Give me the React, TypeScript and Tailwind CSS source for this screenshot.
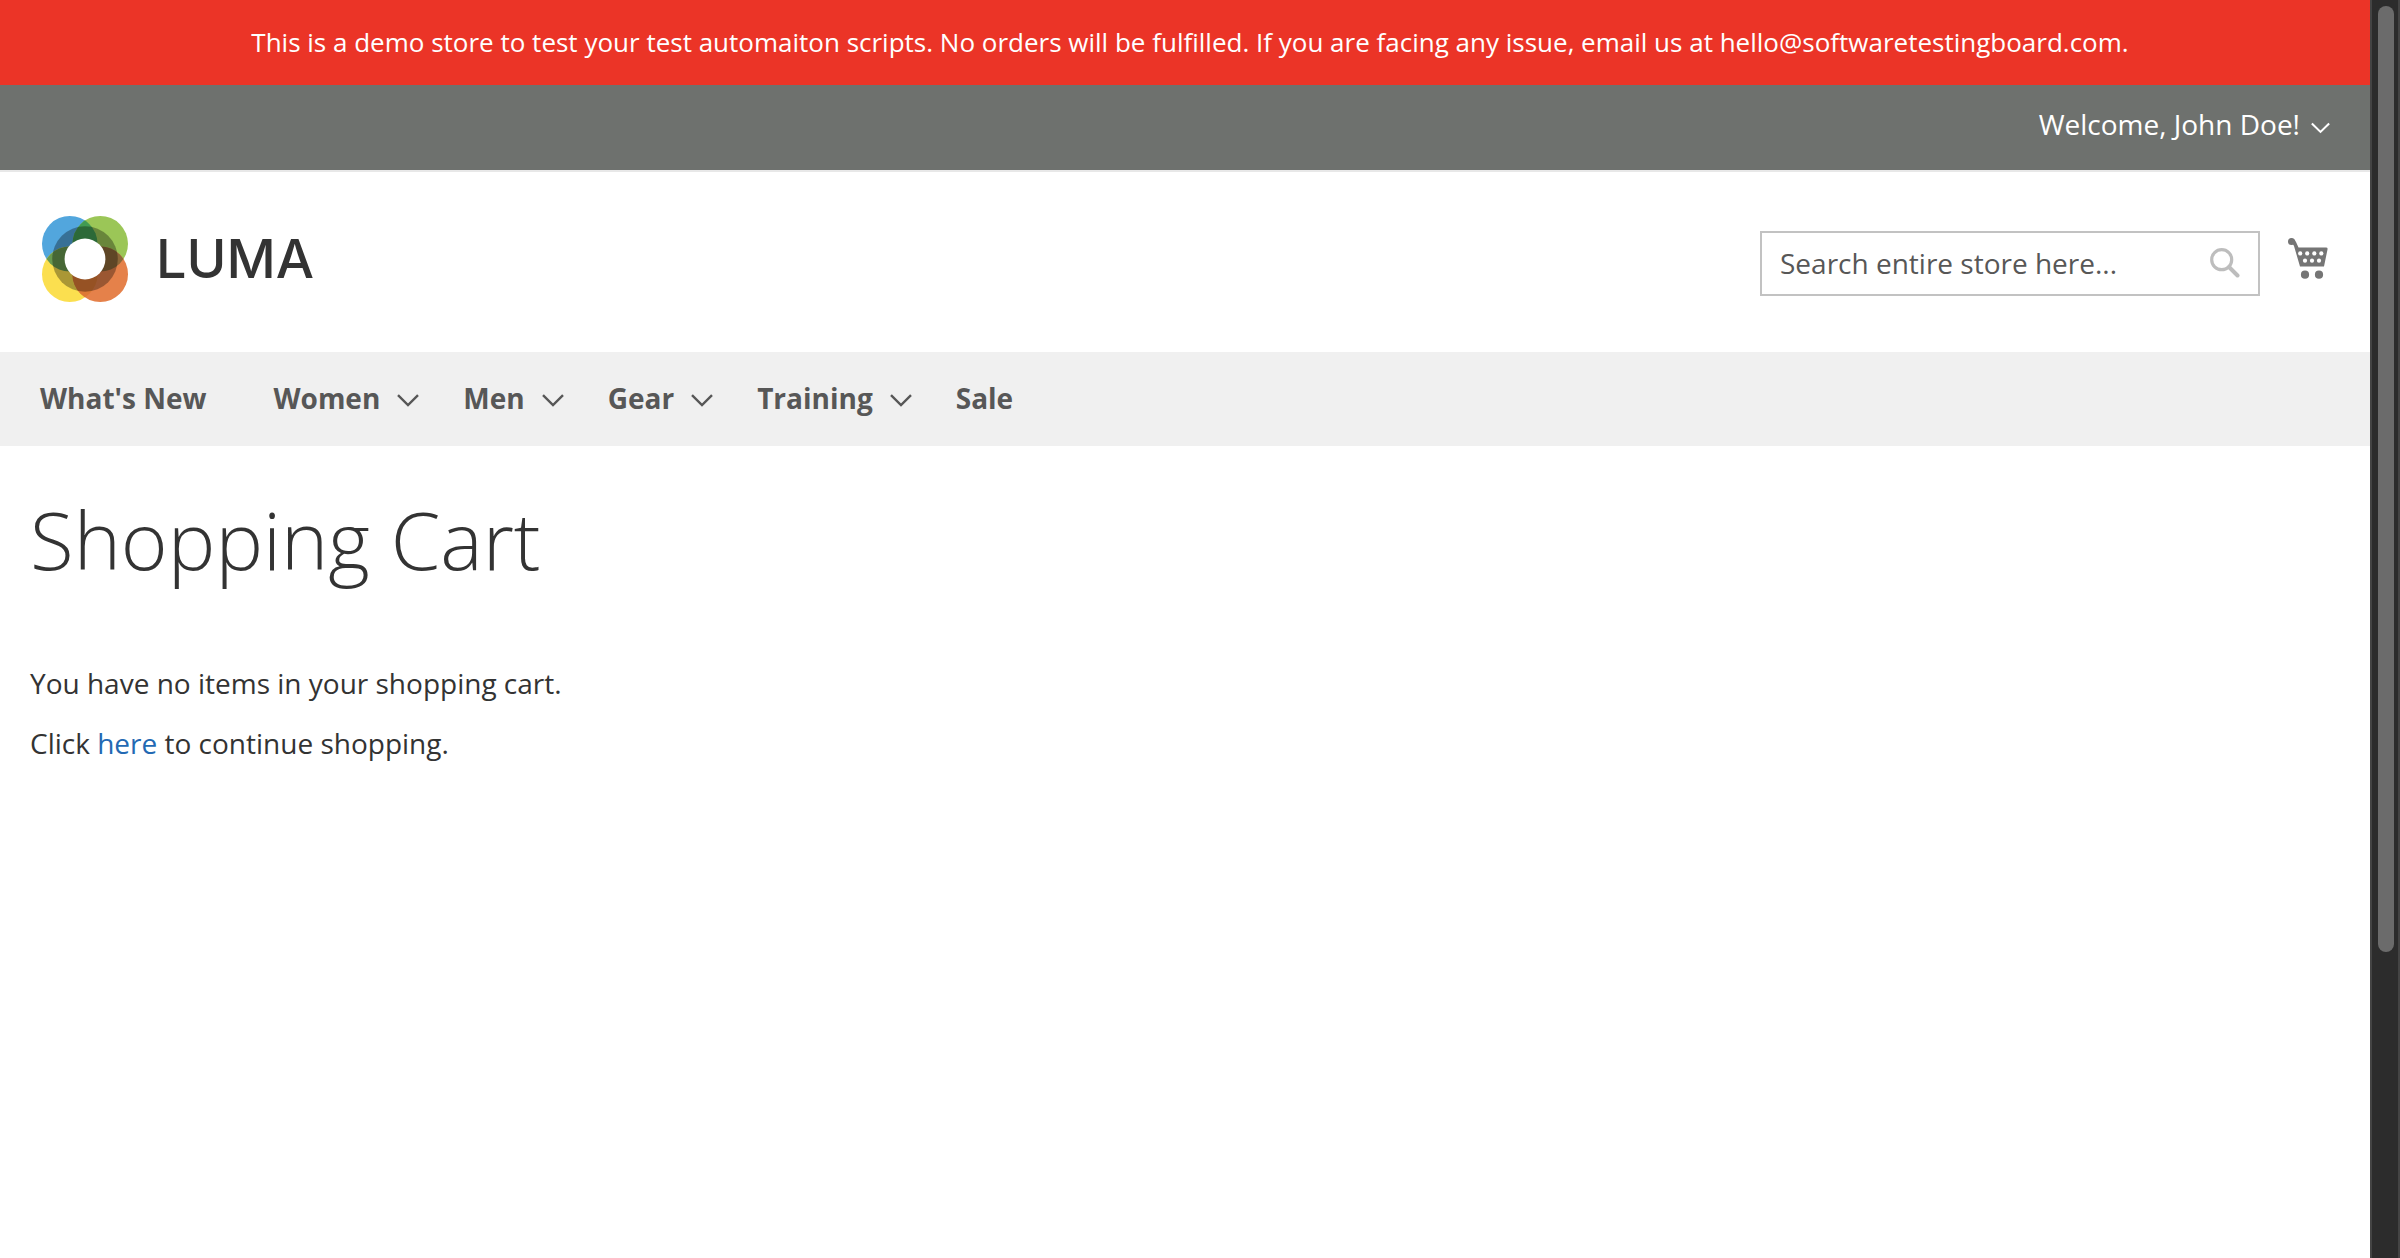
const navItems = [
  { label: "What's New", menu: false },
  { label: "Women", menu: true },
  { label: "Men", menu: true },
  { label: "Gear", menu: true },
  { label: "Training", menu: true },
  { label: "Sale", menu: false },
];

function Chevron({ className }: { className: string }) {
  return (
    <svg viewBox="0 0 22 13" className={className} fill="none" stroke="currentColor" strokeWidth="2.4" aria-hidden="true">
      <path d="M1 1.2 L11 11 L21 1.2" />
    </svg>
  );
}

function LogoMark() {
  return (
    <svg viewBox="66 78 257 257" className="size-[86px]" aria-hidden="true">
      <defs>
        <clipPath id="blue"><circle cx="149" cy="161" r="83" /></clipPath>
        <clipPath id="green"><circle cx="240" cy="161" r="83" /></clipPath>
        <clipPath id="yellow"><circle cx="149" cy="252" r="83" /></clipPath>
      </defs>
      <circle cx="149" cy="161" r="83" fill="#52a6dd" />
      <circle cx="240" cy="161" r="83" fill="#9bc657" />
      <circle cx="149" cy="252" r="83" fill="#fbdf4f" />
      <circle cx="240" cy="252" r="83" fill="#e5814a" />
      <circle cx="240" cy="161" r="83" fill="#419b53" clipPath="url(#blue)" />
      <circle cx="149" cy="252" r="83" fill="#68994f" clipPath="url(#blue)" />
      <circle cx="240" cy="252" r="83" fill="#8d6839" clipPath="url(#green)" />
      <circle cx="240" cy="252" r="83" fill="#de7a35" clipPath="url(#yellow)" />
      <circle cx="194.5" cy="206.5" r="98" fill="#000" fillOpacity="0.32" />
      <circle cx="194.5" cy="206.5" r="61" fill="#fff" />
    </svg>
  );
}

function CartIcon() {
  return (
    <svg viewBox="0 0 40 42" className="h-[42px] w-10" fill="#757575" aria-hidden="true">
      <circle cx="3.5" cy="3.5" r="3.5" />
      <path d="M2 1 Q6 0 8 4 L10.5 9.5 L38 9.5 Q40 9.5 39.5 11.5 L36 28.5 L12 28.5 L6 8 Z" />
      <circle cx="17" cy="36.7" r="4.1" />
      <circle cx="31" cy="36.7" r="4.1" />
      <g fill="#fff">
        <circle cx="12.2" cy="15.4" r="2.1" /><circle cx="19.2" cy="15.4" r="2.1" />
        <circle cx="26.3" cy="15.4" r="2.1" /><circle cx="33.3" cy="15.4" r="2.1" />
        <circle cx="17" cy="22.7" r="2.1" /><circle cx="24" cy="22.7" r="2.1" /><circle cx="31" cy="22.7" r="2.1" />
      </g>
    </svg>
  );
}

export default function App() {
  return (
    <div className="flex min-h-screen bg-white font-['Open_Sans',sans-serif] text-[28px] leading-10 text-[#333333]">
      <div className="min-w-0 flex-1">
        <p className="bg-[#eb3427] py-6 pr-5 pl-[30px] text-center text-[26px] leading-[37px] text-white">
          This is a demo store to test your test automaiton scripts. No orders will be fulfilled. If you are facing any issue, email us at hello@softwaretestingboard.com.
        </p>
        <header>
          <div className="flex h-[87px] justify-end border-b-2 border-[#e8e8e8] bg-[#6e716e] px-10 pt-[19px]">
            <button type="button" className="flex h-10 items-center gap-[11px] text-white">
              <span>Welcome, John Doe!</span>
              <Chevron className="mt-2 h-3 w-[19px]" />
            </button>
          </div>
          <div className="flex items-center justify-between px-[42px] pt-11 pb-[50px]">
            <a href="#home" className="flex items-center gap-7 text-[#333333]" aria-label="Luma">
              <LogoMark />
              <span className="font-['Inter',sans-serif] text-[54px] leading-none font-medium">LUMA</span>
            </a>
            <div className="flex items-center gap-7">
              <form className="mt-2 flex h-[65px] w-[500px] items-center border-2 border-[#c2c2c2] px-[18px]">
                <input type="search" aria-label="Search" placeholder="Search entire store here..." className="min-w-0 flex-1 outline-none placeholder:text-[#575757]" />
                <button type="button" aria-label="Search" className="text-[#bdbdbd]">
                  <svg viewBox="0 0 30 30" className="size-[30px]" fill="none" stroke="currentColor" strokeWidth="3.2" aria-hidden="true">
                    <circle cx="11.7" cy="11.7" r="10" />
                    <path d="M19 19 L27.5 27.5" strokeWidth="4" strokeLinecap="round" />
                  </svg>
                </button>
              </form>
              <button type="button" aria-label="My Cart"><CartIcon /></button>
            </div>
          </div>
          <nav className="flex h-[94px] items-center gap-11 bg-[#f0f0f0] px-10 pb-0.5 font-bold text-[#575757]">
            {navItems.map((item) => (
              <a key={item.label} href="#category" className="flex items-center gap-[17px] first:mr-[23px]">
                <span>{item.label}</span>
                {item.menu && <Chevron className="mt-1 h-[13px] w-[22px]" />}
              </a>
            ))}
          </nav>
        </header>
        <main className="px-[30px] pt-[49px]">
          <h1 className="text-[80px] leading-[88px] font-light">Shopping Cart</h1>
          <p className="mt-20">You have no items in your shopping cart.</p>
          <p className="mt-5">Click <a href="#shop" className="text-[#2369b3]">here</a> to continue shopping.</p>
        </main>
      </div>
      <div className="w-[30px] border-x-2 border-[#444444] bg-[#2c2c2c] pt-1.5 pl-1.5" aria-hidden="true">
        <div className="h-[946px] w-4 rounded-full bg-[#6b6b6b]" />
      </div>
    </div>
  );
}
